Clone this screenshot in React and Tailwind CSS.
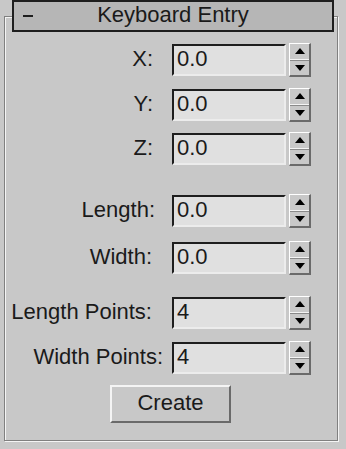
import React from "react";

const rows = [
  { label: "X:", value: "0.0", pr: "pr-[19px]", mt: "mt-0" },
  { label: "Y:", value: "0.0", pr: "pr-[19px]", mt: "mt-[13px]" },
  { label: "Z:", value: "0.0", pr: "pr-[19px]", mt: "mt-[12px]" },
  { label: "Length:", value: "0.0", pr: "pr-[17px]", mt: "mt-[30px]" },
  { label: "Width:", value: "0.0", pr: "pr-[20px]", mt: "mt-[15px]" },
  { label: "Length Points:", value: "4", pr: "pr-[20px]", mt: "mt-[23px]" },
  { label: "Width Points:", value: "4", pr: "pr-[9px]", mt: "mt-[13px]" },
];

const Spinner = () => (
  <div className="ml-[3px] flex h-[34px] w-[22px] flex-col border-t border-l border-t-white border-l-white border-r-2 border-b-2 border-r-[#6a6a6a] border-b-[#6a6a6a] bg-[#c8c8c8]">
    <div className="flex flex-1 items-center justify-center border-b border-b-[#f4f4f4]">
      <svg width="10" height="6" viewBox="0 0 10 6">
        <polygon points="5,0 10,6 0,6" fill="#000" />
      </svg>
    </div>
    <div className="flex flex-1 items-center justify-center border-t border-t-[#8a8a8a]">
      <svg width="10" height="6" viewBox="0 0 10 6">
        <polygon points="0,0 10,0 5,6" fill="#000" />
      </svg>
    </div>
  </div>
);

const Row = ({ label, value, pr, mt }) => (
  <div className={`flex h-[32px] items-center ${mt}`}>
    <div className={`w-[167px] text-right leading-none ${pr} pb-[3px]`}>{label}</div>
    <div className="flex h-[32px] w-[114px] items-center border-t-2 border-l-2 border-t-[#1e1e1e] border-l-[#1e1e1e] border-r-2 border-b-2 border-r-[#ececec] border-b-[#ececec] bg-[#e0e0e0] pl-[3px] pb-[3px] leading-none">
      {value}
    </div>
    <Spinner />
  </div>
);

export default function App() {
  return (
    <div
      className="flex h-[449px] w-[346px] flex-col bg-[#c8c8c8] text-[22px] text-[#1a1a1a]"
      style={{ fontFamily: '"Liberation Sans", Arial, sans-serif' }}
    >
      <div className="relative z-10 ml-[12px] flex h-[32px] w-[322px] items-center border-2 border-[#1e1e1e] bg-[#b6b6b6] leading-none">
        <span className="ml-[9px] block h-[2px] w-[10px] bg-[#1e1e1e]" />
        <span className="flex-1 pb-[3px] pr-[19px] text-center">Keyboard Entry</span>
      </div>
      <div className="ml-[4px] -mt-[16px] flex h-[425px] w-[334px] flex-col border border-[#808080] pt-[27px] shadow-[1px_1px_0_#f4f4f4,inset_1px_1px_0_#f4f4f4]">
        {rows.map((r) => (
          <Row key={r.label} {...r} />
        ))}
        <div className="mt-[11px] flex">
          <button className="ml-[105px] flex h-[38px] w-[121px] items-center justify-center border-t-2 border-l-2 border-t-[#f4f4f4] border-l-[#f4f4f4] border-r-2 border-b-2 border-r-[#6a6a6a] border-b-[#6a6a6a] bg-[#c8c8c8] pb-[3px] leading-none">
            Create
          </button>
        </div>
      </div>
    </div>
  );
}
